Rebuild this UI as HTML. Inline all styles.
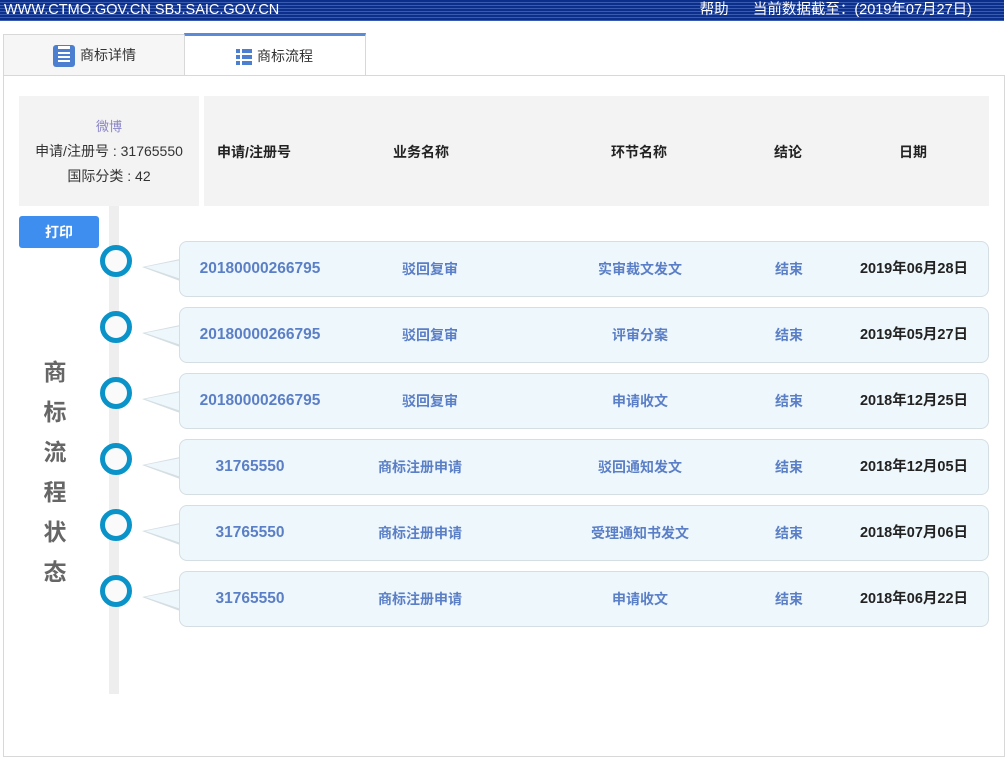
<!DOCTYPE html>
<html><head><meta charset="utf-8"><style>
*{margin:0;padding:0;box-sizing:border-box}
body{width:1008px;height:759px;background:#fff;font-family:"Liberation Sans","Noto Sans CJK SC",sans-serif;position:relative;overflow:hidden;font-size:13px}
.top{position:absolute;left:0;top:0;width:1004px;height:21px;background:repeating-linear-gradient(#0d2f8c 0 2px,#3a5cb0 2px 3px);color:#fff;font-size:14.5px;line-height:21px}
.top .l{position:absolute;left:4px}
.top .r{position:absolute;right:32px}
.tab1{position:absolute;left:3px;top:34px;width:182px;height:42px;background:#f6f6f6;border:1px solid #d8d8d8;font-size:14px;color:#333;line-height:40px;padding-left:48px}
.tab2{position:absolute;left:184px;top:33px;width:182px;height:43px;background:#fff;border:1px solid #d8d8d8;border-top:3px solid #5b8bd6;border-bottom:none;font-size:14px;color:#333;line-height:40px;padding-left:72px}
.main{position:absolute;left:3px;top:75px;width:1002px;height:682px;border:1px solid #d8d8d8}
.abs{position:absolute}
.hl{left:19px;top:96px;width:180px;height:110px;background:#f3f3f3;text-align:center;color:#333;font-size:14px;line-height:25px;padding-top:18px}
.hr{left:204px;top:96px;width:785px;height:110px;background:#f3f3f3;font-weight:bold;font-size:14px;color:#222}
.hr span,.row span{position:absolute;transform:translateX(-50%);white-space:nowrap}
.btn{left:19px;top:216px;width:80px;height:32px;background:#3e8ef0;border-radius:3px;color:#fff;font-weight:bold;text-align:center;line-height:32px;font-size:14px}
.bar{left:109px;top:206px;width:10px;height:488px;background:#eee}
.circ{width:32px;height:32px;border:5px solid #0a93c8;border-radius:50%;background:#fafafa}
.row{left:179px;width:810px;height:56px;background:#eef7fb;border:1px solid #d5dee3;border-radius:8px;font-weight:bold;color:#5b7fc7;font-size:14px;line-height:54px}
.row .n{font-size:15.5px}
.row .d{color:#222;font-size:14.5px}
.tri{width:0;height:0;border-top:8px solid transparent;border-bottom:14px solid transparent;border-right:38px solid #d5dee3}
.tri2{width:0;height:0;border-top:7px solid transparent;border-bottom:12px solid transparent;border-right:36px solid #eef7fb}
.vt{left:40px;top:352px;width:30px;font-size:23px;font-weight:bold;color:#666;line-height:40px;text-align:center}
</style></head><body>
<div class="top"><span class="l">WWW.CTMO.GOV.CN SBJ.SAIC.GOV.CN</span><span class="r">帮助&nbsp;&nbsp;&nbsp;&nbsp;&nbsp;&nbsp;当前数据截至：(2019年07月27日)</span></div>
<div class="tab1"><svg style="position:absolute;left:49px;top:10px" width="22" height="22"><rect width="22" height="22" rx="3" fill="#4d7fd0"/><rect x="5" y="1" width="12" height="3" fill="#fff"/><rect x="5" y="7" width="12" height="2" fill="#fff"/><rect x="5" y="11" width="12" height="2" fill="#fff"/><rect x="5" y="15" width="12" height="2" fill="#fff"/></svg><span style="margin-left:28px">商标详情</span></div>
<div class="tab2"><svg style="position:absolute;left:51px;top:13px" width="16" height="16"><g fill="#4d7fd0"><rect x="0" y="0" width="4" height="4"/><rect x="6" y="0" width="10" height="4"/><rect x="0" y="6" width="4" height="4"/><rect x="6" y="6" width="10" height="4"/><rect x="0" y="12" width="4" height="4"/><rect x="6" y="12" width="10" height="4"/></g></svg>商标流程</div>
<div class="main"></div>
<div class="abs hl"><div style="color:#8a85c8;font-size:13px">微博</div><div>申请/注册号 : 31765550</div><div>国际分类 : 42</div></div>
<div class="abs hr"><span style="left:50px;top:46px">申请/注册号</span><span style="left:217px;top:46px">业务名称</span><span style="left:435px;top:46px">环节名称</span><span style="left:584px;top:46px">结论</span><span style="left:709px;top:46px">日期</span></div>
<div class="abs btn">打印</div>
<div class="abs bar"></div>
<div class="abs vt">商<br>标<br>流<br>程<br>状<br>态</div>
<div class="abs" style="left:0;top:0">
<div class="abs tri" style="left:142px;top:259px"></div><div class="abs tri2" style="left:145px;top:260px"></div>
<div class="abs row" style="top:241px"><span class="n" style="left:80px">20180000266795</span><span style="left:250px">驳回复审</span><span style="left:460px">实审裁文发文</span><span style="left:609px">结束</span><span class="d" style="left:734px">2019年06月28日</span></div>
<div class="abs circ" style="left:100px;top:245px"></div>
<div class="abs tri" style="left:142px;top:325px"></div><div class="abs tri2" style="left:145px;top:326px"></div>
<div class="abs row" style="top:307px"><span class="n" style="left:80px">20180000266795</span><span style="left:250px">驳回复审</span><span style="left:460px">评审分案</span><span style="left:609px">结束</span><span class="d" style="left:734px">2019年05月27日</span></div>
<div class="abs circ" style="left:100px;top:311px"></div>
<div class="abs tri" style="left:142px;top:391px"></div><div class="abs tri2" style="left:145px;top:392px"></div>
<div class="abs row" style="top:373px"><span class="n" style="left:80px">20180000266795</span><span style="left:250px">驳回复审</span><span style="left:460px">申请收文</span><span style="left:609px">结束</span><span class="d" style="left:734px">2018年12月25日</span></div>
<div class="abs circ" style="left:100px;top:377px"></div>
<div class="abs tri" style="left:142px;top:457px"></div><div class="abs tri2" style="left:145px;top:458px"></div>
<div class="abs row" style="top:439px"><span class="n" style="left:70px">31765550</span><span style="left:240px">商标注册申请</span><span style="left:460px">驳回通知发文</span><span style="left:609px">结束</span><span class="d" style="left:734px">2018年12月05日</span></div>
<div class="abs circ" style="left:100px;top:443px"></div>
<div class="abs tri" style="left:142px;top:523px"></div><div class="abs tri2" style="left:145px;top:524px"></div>
<div class="abs row" style="top:505px"><span class="n" style="left:70px">31765550</span><span style="left:240px">商标注册申请</span><span style="left:460px">受理通知书发文</span><span style="left:609px">结束</span><span class="d" style="left:734px">2018年07月06日</span></div>
<div class="abs circ" style="left:100px;top:509px"></div>
<div class="abs tri" style="left:142px;top:589px"></div><div class="abs tri2" style="left:145px;top:590px"></div>
<div class="abs row" style="top:571px"><span class="n" style="left:70px">31765550</span><span style="left:240px">商标注册申请</span><span style="left:460px">申请收文</span><span style="left:609px">结束</span><span class="d" style="left:734px">2018年06月22日</span></div>
<div class="abs circ" style="left:100px;top:575px"></div>
</div>
</body></html>
